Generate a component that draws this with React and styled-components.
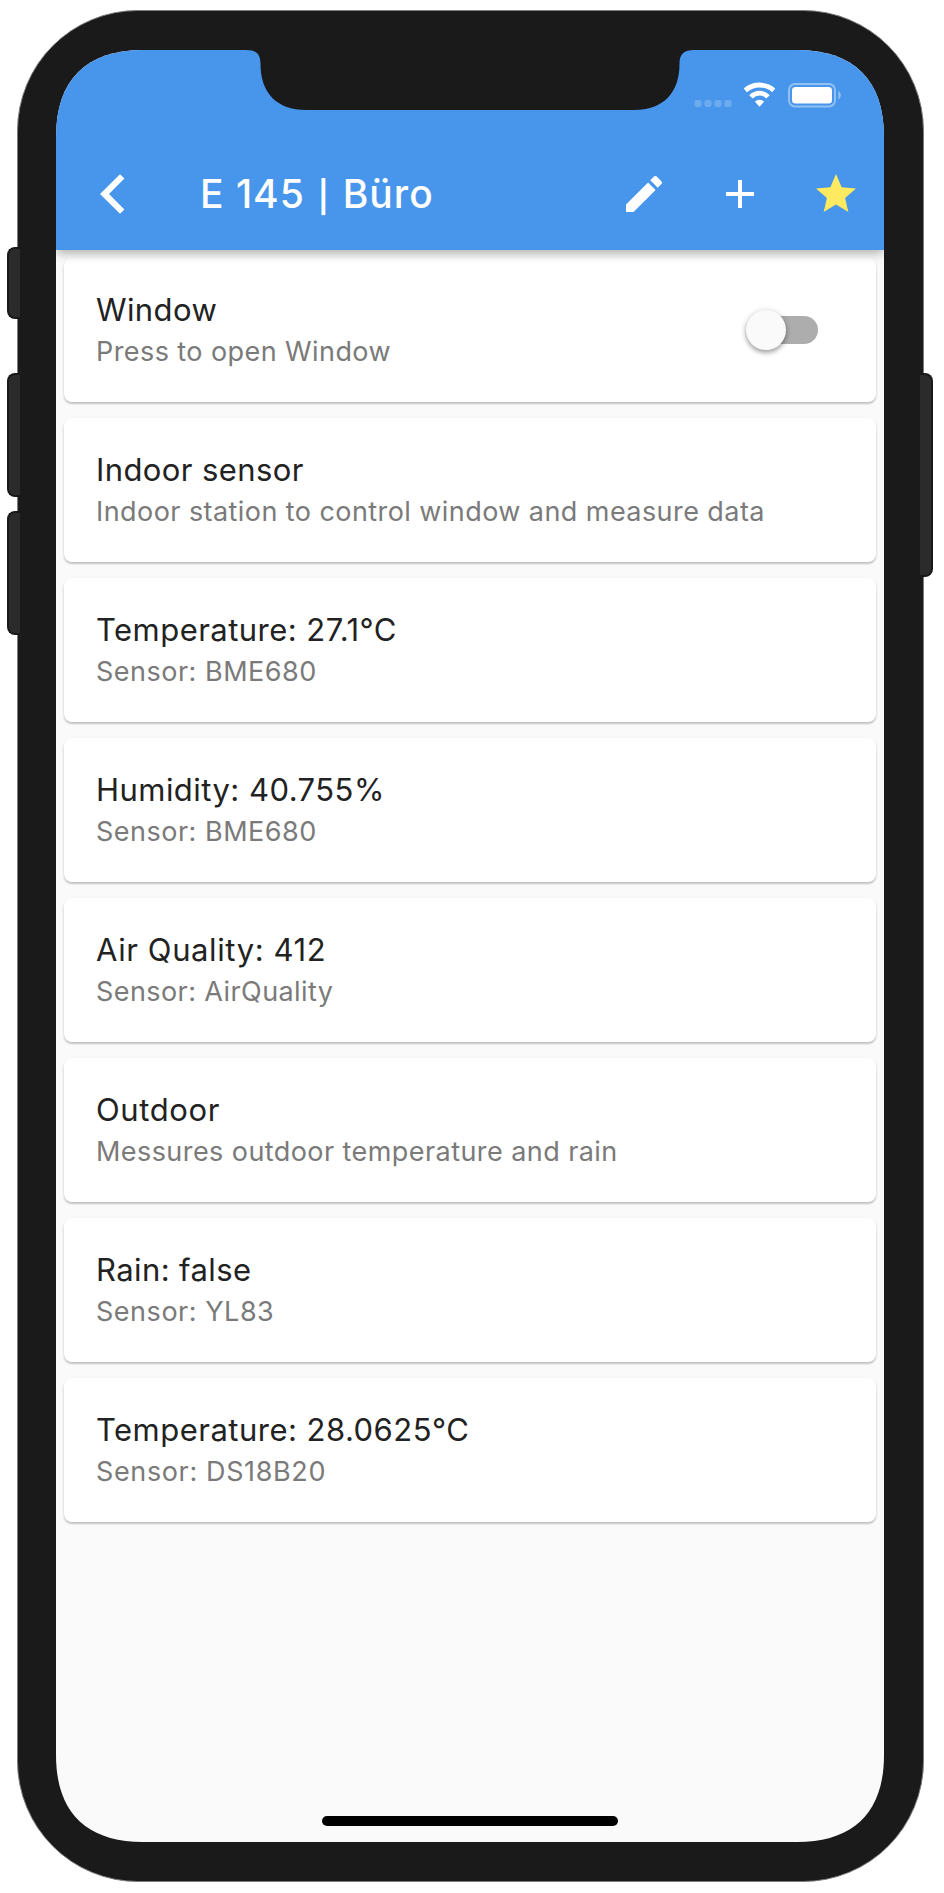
import React from 'react';
import styled, { createGlobalStyle } from 'styled-components';

const GlobalStyle = createGlobalStyle`
  body { margin: 0; background: #fff; }
  * { box-sizing: border-box; }
`;

const Stage = styled.main`
  position: relative;
  width: 944px;
  height: 1893px;
  padding: 10px 21px 0 17px;
  overflow: hidden;
  font-family: Inter, 'Liberation Sans', sans-serif;
`;

const SideButton = styled.span`
  position: absolute;
  top: ${(p) => p.$top}px;
  ${(p) => (p.$right ? 'left: 920px' : 'left: 7px')};
  width: 13px;
  height: ${(p) => p.$height}px;
  background: #2b2b2b;
  border: 2px solid #191919;
  ${(p) => (p.$right ? 'border-left: 0; border-radius: 0 8px 8px 0' : 'border-right: 0; border-radius: 8px 0 0 8px')};
`;

const Frame = styled.div`
  position: relative;
  width: 907px;
  height: 1872px;
  padding: 39px 38px 38px;
  border: 1px solid #7d7d7d;
  border-radius: 121px;
  background: #1a1a1a;
`;

const Screen = styled.div`
  position: relative;
  width: 828px;
  height: 1792px;
  background: #fafafa;
  display: flex;
  flex-direction: column;
  clip-path: path('M0 87 C0 30 30 0 87 0 H741 C798 0 828 30 828 87 V1705 C828 1762 798 1792 741 1792 H87 C30 1792 0 1762 0 1705 Z');
`;

const Notch = styled.svg`
  position: absolute;
  z-index: 2;
  top: 0;
  left: 190px;
`;

const Header = styled.header`
  position: relative;
  flex: none;
  height: 200px;
  background: #4896ec;
  box-shadow: 0 4px 8px -1px rgba(0, 0, 0, 0.18), 0 6px 10px rgba(0, 0, 0, 0.08), 0 2px 16px rgba(0, 0, 0, 0.05);
  z-index: 1;
`;

const StatusBar = styled.div`
  height: 88px;
  padding: 32px 42px 0 0;
  display: flex;
  justify-content: flex-end;
  align-items: flex-start;
`;

const Toolbar = styled.div`
  height: 112px;
  padding: 0 24px 0 32px;
  display: flex;
  align-items: center;
`;

const Title = styled.h1`
  flex: 1;
  margin: 0 0 0 64px;
  font-size: 39px;
  line-height: 48px;
  font-weight: 500;
  letter-spacing: 1px;
  color: #fff;
`;

const Divider = styled.span`
  margin: 0 1.5px;
  font-size: 31px;
  line-height: 1;
  font-weight: 600;
`;

const IconButton = styled.button`
  width: 48px;
  height: 48px;
  margin-left: ${(p) => p.$gap || 0}px;
  padding: 0;
  border: 0;
  background: none;
  color: ${(p) => p.$color || '#fff'};
  svg { display: block; width: 48px; height: 48px; fill: currentColor; }
`;

const List = styled.ul`
  flex: 1;
  margin: 0;
  padding: 8px;
  list-style: none;
  display: flex;
  flex-direction: column;
  gap: 16px;
`;

const Card = styled.li`
  height: 144px;
  padding: 0 58px 0 32px;
  display: flex;
  align-items: center;
  justify-content: space-between;
  border-radius: 8px;
  background: #fff;
  box-shadow: 0 2px 2px rgba(0, 0, 0, 0.18), 0 1px 3px rgba(0, 0, 0, 0.09);
`;

const CardBody = styled.div`
  padding-top: 2px;
`;

const CardTitle = styled.div`
  font-size: 31px;
  line-height: 40px;
  letter-spacing: ${(p) => p.$spacing}px;
  color: #222;
  white-space: nowrap;
`;

const CardText = styled.div`
  margin-top: 2px;
  font-size: 27px;
  line-height: 40px;
  letter-spacing: ${(p) => p.$spacing}px;
  color: #7a7a7a;
  white-space: nowrap;
`;

const Switch = styled.button`
  width: 72px;
  height: 40px;
  padding: 6px 0 6px 4px;
  border: 0;
  background: none;
`;

const Track = styled.span`
  display: flex;
  align-items: center;
  height: 28px;
  border-radius: 14px;
  background: #adadad;
`;

const Thumb = styled.span`
  flex: none;
  width: 40px;
  height: 40px;
  margin-left: -4px;
  border-radius: 50%;
  background: #fafafa;
  box-shadow: 0 3px 4px rgba(0, 0, 0, 0.25), 0 1px 6px rgba(0, 0, 0, 0.2);
`;

const HomeIndicator = styled.div`
  align-self: center;
  flex: none;
  width: 296px;
  height: 10px;
  margin-bottom: 16px;
  border-radius: 5px;
  background: #000;
`;

const rows = [
  { title: 'Window', text: 'Press to open Window', toggle: true, spacing: [0.4, 0.42] },
  { title: 'Indoor sensor', text: 'Indoor station to control window and measure data', spacing: [0.4, 0.43] },
  { title: 'Temperature: 27.1°C', text: 'Sensor: BME680', spacing: [0.46, 0.5] },
  { title: 'Humidity: 40.755%', text: 'Sensor: BME680', spacing: [0.46, 0.5] },
  { title: 'Air Quality: 412', text: 'Sensor: AirQuality', spacing: [0.6, 0.42] },
  { title: 'Outdoor', text: 'Messures outdoor temperature and rain', spacing: [0.6, 0.43] },
  { title: 'Rain: false', text: 'Sensor: YL83', spacing: [0.4, 0.53] },
  { title: 'Temperature: 28.0625°C', text: 'Sensor: DS18B20', spacing: [0.48, 0.63] },
];

function StatusIcons() {
  return (
    <svg width="148" height="26" viewBox="0 0 148 26" fill="#fff">
      <g opacity="0.2">
        <rect x="0.5" y="18" width="7" height="7" rx="2" />
        <rect x="10.5" y="18" width="7" height="7" rx="2" />
        <rect x="20.5" y="18" width="7" height="7" rx="2" />
        <rect x="30.5" y="18" width="7" height="7" rx="2" />
      </g>
      <g fill="none" stroke="#fff" strokeWidth="4.8">
        <path d="M51.3 8.4 A21.4 21.4 0 0 1 79.7 8.4" />
        <path d="M57 14.9 A11.5 11.5 0 0 1 74 14.9" />
      </g>
      <path d="M60.9 19.6 A6.4 6.4 0 0 1 70.1 19.6 L65.5 24.7 Z" />
      <rect x="95" y="2" width="46" height="22.5" rx="6" fill="none" stroke="#fff" strokeWidth="2" opacity="0.4" />
      <rect x="98" y="5" width="40" height="16.5" rx="3.5" />
      <path d="M144.3 9 C147.5 10.4 147.5 16 144.3 17.4 Z" opacity="0.4" />
    </svg>
  );
}

export default function App() {
  return (
    <>
      <GlobalStyle />
      <Stage>
        <Frame>
          <Screen>
            <Header>
              <StatusBar><StatusIcons /></StatusBar>
              <Toolbar>
                <IconButton aria-label="Back">
                  <svg viewBox="0 0 24 24"><path d="M18.2 4.3 L16 2.1 L6 12 L16 21.9 L18.2 19.7 L10.5 12z" /></svg>
                </IconButton>
                <Title>E 145 <Divider>|</Divider> Büro</Title>
                <IconButton aria-label="Edit">
                  <svg viewBox="0 0 24 24"><path d="M3 17.25V21h3.75L17.81 9.94l-3.75-3.75L3 17.25zM20.71 7.04c.39-.39.39-1.02 0-1.41l-2.34-2.34c-.39-.39-1.02-.39-1.41 0l-1.83 1.83 3.75 3.75 1.83-1.83z" /></svg>
                </IconButton>
                <IconButton $gap={48} aria-label="Add">
                  <svg viewBox="0 0 24 24"><path d="M19 13h-6v6h-2v-6H5v-2h6V5h2v6h6v2z" /></svg>
                </IconButton>
                <IconButton $gap={48} $color="#fdea60" aria-label="Favorite">
                  <svg viewBox="0 0 24 24"><path d="M12 17.27L18.18 21l-1.64-7.03L22 9.24l-7.19-.61L12 2 9.19 8.63 2 9.24l5.46 4.73L5.82 21z" /></svg>
                </IconButton>
              </Toolbar>
            </Header>
            <List>
              {rows.map((r, i) => (
                <Card key={i}>
                  <CardBody>
                    <CardTitle $spacing={r.spacing[0]}>{r.title}</CardTitle>
                    <CardText $spacing={r.spacing[1]}>{r.text}</CardText>
                  </CardBody>
                  {r.toggle && (
                    <Switch aria-label={r.title}><Track><Thumb /></Track></Switch>
                  )}
                </Card>
              ))}
            </List>
            <HomeIndicator />
            <Notch width="448" height="60" viewBox="0 0 448 60" fill="#1a1a1a">
              <path d="M0 0 C10 0 14.5 4 14.5 14 C14.5 43 31 60 60 60 H388 C417 60 433.5 43 433.5 14 C433.5 4 438 0 448 0 Z" />
            </Notch>
          </Screen>
        </Frame>
        <SideButton $top={247} $height={72} />
        <SideButton $top={373} $height={124} />
        <SideButton $top={511} $height={124} />
        <SideButton $right $top={373} $height={204} />
      </Stage>
    </>
  );
}
